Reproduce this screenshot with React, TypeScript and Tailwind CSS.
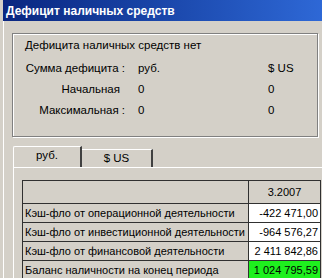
const rows = [
  { label: "Кэш-фло от операционной деятельности", value: "-422 471,00" },
  { label: "Кэш-фло от инвестиционной деятельности", value: "-964 576,27" },
  { label: "Кэш-фло от финансовой деятельности", value: "2 411 842,86" },
  { label: "Баланс наличности на конец периода", value: "1 024 795,59", ok: true },
];

const summary = [
  { label: "Сумма дефицита :", rub: "руб.", usd: "$ US" },
  { label: "Начальная", rub: "0", usd: "0", pad: true },
  { label: "Максимальная :", rub: "0", usd: "0" },
];

export default function App() {
  return (
    <div className="w-[322px] h-[278px] overflow-hidden bg-[#d4d0c8] pl-[3px] font-['Liberation_Sans',Arial,sans-serif] text-[11.5px] text-black">
      <div className="h-[21px] flex items-center pl-[3px] bg-gradient-to-r from-[#0a2680] to-[#2e68d6] text-white font-bold text-[12px]">
        Дефицит наличных средств
      </div>

      <div className="h-[257px] border-l border-white pt-[12px] pl-[8px]">
        {/* group box */}
        <div className="w-[306px] h-[104px] border border-[#808080] shadow-[inset_1px_1px_0_#fff,1px_1px_0_#fff] pt-[4px]">
          <div className="h-[14px] leading-[14px] pl-[12px]">Дефицита наличных средств нет</div>
          <div className="mt-[6px] grid grid-cols-[112px_117px_1fr] gap-x-[13px]">
            {summary.map((s) => (
              <div key={s.label} className="contents">
                <div className={`h-[21px] leading-[21px] text-right ${s.pad ? "pr-[5px]" : ""}`}>{s.label}</div>
                <div className="h-[21px] leading-[21px]">{s.rub}</div>
                <div className="h-[21px] leading-[21px]">{s.usd}</div>
              </div>
            ))}
          </div>
        </div>

        {/* tabs */}
        <div className="mt-[9px] ml-[1px] flex items-end h-[21px]">
          <div className="w-[69px] h-[21px] border-t border-l border-white border-r-2 border-r-[#404040] rounded-tl-[2px] flex items-center justify-center pb-[2px] bg-[#d4d0c8]">
            руб.
          </div>
          <div className="w-[71px] h-[18px] border-t border-white border-r-2 border-r-[#404040] flex items-center justify-center">
            $ US
          </div>
        </div>
        <div className="ml-[1px] border-t border-l border-white h-[120px] pt-[12px] pl-[8px]">
          <table className="w-[298px] border-collapse table-fixed text-[11px]">
            <colgroup>
              <col className="w-[226px]" />
              <col className="w-[72px]" />
            </colgroup>
            <tbody>
              <tr className="h-[23px]">
                <td className="border border-[#303030] bg-[#d4d0c8]"></td>
                <td className="border border-[#303030] bg-[#d4d0c8] text-center">3.2007</td>
              </tr>
              {rows.map((r) => (
                <tr key={r.label} className="h-[19px]">
                  <td className="border border-[#303030] bg-[#d4d0c8] pl-[2px] whitespace-nowrap leading-[17px] overflow-hidden">{r.label}</td>
                  <td className={`border border-[#303030] text-right pr-[2px] whitespace-nowrap leading-[17px] ${r.ok ? "bg-[#1ef01e]" : "bg-white"}`}>
                    {r.value}
                  </td>
                </tr>
              ))}
            </tbody>
          </table>
        </div>
      </div>
    </div>
  );
}
